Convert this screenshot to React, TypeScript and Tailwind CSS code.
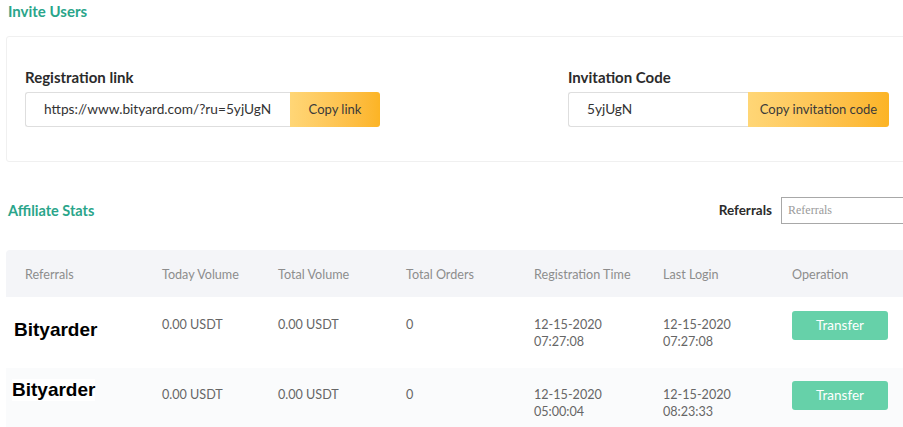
const font = { fontFamily: 'Lato, "Open Sans", sans-serif' };

type Row = {
  name: string;
  today: string;
  total: string;
  orders: string;
  regDate: string;
  regTime: string;
  loginDate: string;
  loginTime: string;
};

const rows: Row[] = [
  {
    name: 'Bityarder',
    today: '0.00 USDT',
    total: '0.00 USDT',
    orders: '0',
    regDate: '12-15-2020',
    regTime: '07:27:08',
    loginDate: '12-15-2020',
    loginTime: '07:27:08',
  },
  {
    name: 'Bityarder',
    today: '0.00 USDT',
    total: '0.00 USDT',
    orders: '0',
    regDate: '12-15-2020',
    regTime: '05:00:04',
    loginDate: '12-15-2020',
    loginTime: '08:23:33',
  },
];

const CopyField = ({
  label,
  value,
  action,
  inputWidth,
  buttonWidth,
}: {
  label: string;
  value: string;
  action: string;
  inputWidth: string;
  buttonWidth: string;
}) => (
  <div className="flex flex-col">
    <span className="mb-[6px] text-[15px] font-bold leading-[18px] text-[#2b2b2b]">
      {label}
    </span>
    <div className="flex h-[35px]">
      <div
        className={`${inputWidth} flex items-center rounded-l-[3px] border border-r-0 border-[#dedede] bg-white pl-[18px] text-[13.7px] text-[#333]`}
      >
        {value}
      </div>
      <button
        className={`${buttonWidth} rounded-r-[3px] bg-gradient-to-r from-[#ffd676] to-[#fcb424] text-[13px] text-[#3a3a3a]`}
      >
        {action}
      </button>
    </div>
  </div>
);

const cols = 'grid grid-cols-[156px_116px_128px_128px_129px_129px_1fr]';

export default function App() {
  return (
    <div
      className="h-[427px] w-[903px] overflow-hidden bg-white"
      style={font}
    >
      <h2 className="pl-2 pt-[3px] text-[15px] font-bold leading-[17px] text-[#2aa58a]">
        Invite Users
      </h2>

      <div className="ml-[6px] mt-[16px] flex h-[126px] w-[920px] items-start rounded-[3px] border border-[#f0f0f0] pl-[18px] pt-[31px]">
        <CopyField
          label="Registration link"
          value="https://www.bityard.com/?ru=5yjUgN"
          action="Copy link"
          inputWidth="w-[265px]"
          buttonWidth="w-[90px]"
        />
        <div className="ml-[188px]">
          <CopyField
            label="Invitation Code"
            value="5yjUgN"
            action="Copy invitation code"
            inputWidth="w-[180px]"
            buttonWidth="w-[141px]"
          />
        </div>
      </div>

      <div className="mt-[35px] flex h-[27px] items-center">
        <h2 className="pl-2 text-[14.5px] font-bold text-[#2aa58a]">
          Affiliate Stats
        </h2>
        <div className="-mr-[20px] ml-auto flex items-center">
          <span className="mr-[9px] text-[13.5px] font-bold text-[#2b2b2b]">
            Referrals
          </span>
          <input
            className="h-[27px] w-[142px] border border-[#a8a8a8] px-[6px] text-[12px] text-[#999] placeholder:text-[#9a9a9a]"
            style={{ fontFamily: '"Liberation Serif", serif' }}
            placeholder="Referrals"
          />
        </div>
      </div>

      <div className="ml-[6px] mt-[26px]">
        <div
          className={`${cols} h-[47px] items-center rounded-tl-[4px] bg-[#f4f5f8] pt-[4px] text-[12.6px] text-[#8d8d8d]`}
        >
          <span className="pl-[19px]">Referrals</span>
          <span>Today Volume</span>
          <span>Total Volume</span>
          <span>Total Orders</span>
          <span>Registration Time</span>
          <span>Last Login</span>
          <span>Operation</span>
        </div>

        {rows.map((row, i) => (
          <div
            key={i}
            className={`${cols} items-start text-[12.6px] leading-[17px] text-[#666] ${
              i === 0 ? 'h-[71px] bg-white pt-[19px]' : 'h-[60px] bg-[#fafbfc] pt-[18px]'
            }`}
          >
            <span
              className={`w-fit bg-white text-[19px] font-bold leading-[22px] text-black ${
                i === 0 ? 'ml-[8px] mt-[3px]' : 'ml-[6px] mt-[-7px]'
              }`}
              style={{ fontFamily: '"Liberation Sans", Arial, sans-serif' }}
            >
              {row.name}
            </span>
            <span>{row.today}</span>
            <span>{row.total}</span>
            <span>{row.orders}</span>
            <span>
              {row.regDate}
              <br />
              {row.regTime}
            </span>
            <span>
              {row.loginDate}
              <br />
              {row.loginTime}
            </span>
            <span className="-mt-[5px]">
              <button className="h-[29px] w-[96px] rounded-[3px] bg-[#66d1a9] text-[13.5px] text-white">
                Transfer
              </button>
            </span>
          </div>
        ))}
      </div>
    </div>
  );
}
